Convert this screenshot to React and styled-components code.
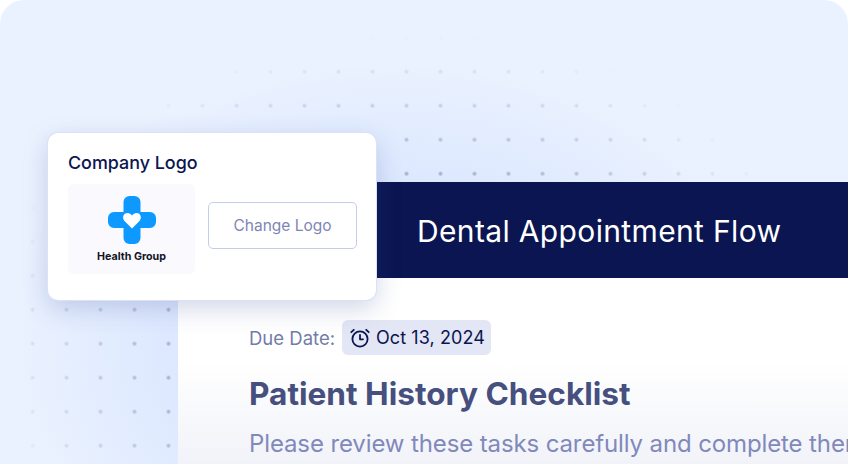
import React from "react";
import styled, { createGlobalStyle } from "styled-components";

const GlobalStyle = createGlobalStyle`
  html, body {
    margin: 0;
    padding: 0;
    background: #ffffff;
  }
  * {
    box-sizing: border-box;
  }
`;

const Stage = styled.div`
  position: relative;
  width: 848px;
  height: 464px;
  overflow: hidden;
  padding: 182px 0 0 178px;
  border-radius: 24px 24px 0 0;
  font-family: "Inter", "Liberation Sans", sans-serif;
  background:
    radial-gradient(ellipse 390px 290px at 395px 345px, #d9e6ff 0%, #dce8ff 55%, rgba(235, 242, 255, 0) 100%),
    #ebf2ff;
`;

const DotGrid = styled.div`
  position: absolute;
  inset: 0;
  background-image: radial-gradient(circle at 50% 50%, #a3a5c0 0, #a3a5c0 1.5px, transparent 2.2px);
  background-size: 34px 34px;
  background-position: 151.5px 20.7px;
  mask-image: radial-gradient(ellipse 430px 315px at 410px 345px, #000 45%, transparent 100%);
`;

const Sheet = styled.main`
  position: relative;
  width: 670px;
  height: 282px;
  display: flex;
  flex-direction: column;
  background: #ffffff;
  overflow: hidden;
`;

const Banner = styled.header`
  height: 96px;
  flex: none;
  display: flex;
  align-items: center;
  padding: 1px 0 0 239px;
  background: #0a1551;
  color: #ffffff;
  font-size: 30px;
  letter-spacing: 0.35px;
  white-space: nowrap;
`;

const Body = styled.section`
  flex: 1;
  display: flex;
  flex-direction: column;
  align-items: flex-start;
  padding: 42px 0 0 71px;
  white-space: nowrap;
  background: linear-gradient(180deg, #ffffff 0%, #ffffff 45%, #f1f3f9 100%);
`;

const DueRow = styled.div`
  display: flex;
  align-items: center;
  gap: 7px;
`;

const DueLabel = styled.span`
  font-size: 18.500px;
  color: #727bab;
`;

const DuePill = styled.div`
  display: flex;
  align-items: center;
  gap: 6px;
  height: 35px;
  padding: 0 6px 0 8px;
  border-radius: 6px;
  background: #e3e6f4;
  color: #0a1551;
  font-size: 18px;
  letter-spacing: 0.08px;
`;

const Heading = styled.h1`
  margin: 20px 0 0;
  font-size: 31.600px;
  line-height: 38px;
  font-weight: 700;
  color: #464f7d;
`;

const Lead = styled.p`
  margin: 16px 0 0;
  font-size: 24px;
  line-height: 30px;
  letter-spacing: -0.12px;
  color: #8189ba;
`;

const LogoCard = styled.aside`
  position: absolute;
  left: 48px;
  top: 133px;
  width: 328px;
  height: 167px;
  padding: 18px 19px 0 20px;
  border-radius: 10px;
  background: #ffffff;
  box-shadow: 0 0 0 1px #dbe2f4, 0 8px 26px rgba(60, 80, 150, 0.24);
`;

const CardTitle = styled.h2`
  margin: 0;
  font-size: 17.900px;
  line-height: 24px;
  font-weight: 500;
  color: #0a1551;
`;

const CardRow = styled.div`
  display: flex;
  align-items: flex-start;
  gap: 13px;
  margin-top: 9px;
`;

const LogoTile = styled.div`
  width: 127px;
  height: 90px;
  display: flex;
  flex-direction: column;
  align-items: center;
  padding-top: 12px;
  border-radius: 6px;
  background: #f9f9fe;
`;

const LogoName = styled.span`
  margin-top: 6px;
  font-size: 10.700px;
  line-height: 14px;
  font-weight: 700;
  color: #111526;
`;

const ChangeButton = styled.button`
  width: 149px;
  height: 47px;
  margin-top: 18px;
  padding: 0;
  border: 1px solid #c5cde8;
  border-radius: 5px;
  background: #ffffff;
  font-family: inherit;
  font-size: 15.500px;
  color: #7d86b5;
`;

const HealthMark = () => (
  <svg width="48" height="48" viewBox="0 0 48 48">
    <path
      fill="#0d99ff"
      d="M15.500 6a6 6 0 0 1 6-6h5a6 6 0 0 1 6 6v10H42a6 6 0 0 1 6 6v4a6 6 0 0 1-6 6H32.500v10a6 6 0 0 1-6 6h-5a6 6 0 0 1-6-6V32H6a6 6 0 0 1-6-6v-4a6 6 0 0 1 6-6h9.500z"
    />
    <path
      fill="#ffffff"
      d="M24 32.500 17 25.500c-3.500-3.400-1.700-8.500 2.400-8.500 1.900 0 3.500.9 4.600 2.400 1.100-1.500 2.700-2.400 4.600-2.400 4.100 0 5.900 5.100 2.400 8.500z"
    />
  </svg>
);

const AlarmIcon = () => (
  <svg width="20" height="20" viewBox="0 0 20 20" fill="none" stroke="#0a1551" strokeWidth="1.8" strokeLinecap="round" strokeLinejoin="round">
    <circle cx="10" cy="11" r="7.600" />
    <path d="M10 7v4.300h3" />
    <path d="M1.300 4.200 3.800 1.800" />
    <path d="M18.700 4.200 16.200 1.800" />
  </svg>
);

export default function App() {
  return (
    <>
      <GlobalStyle />
      <Stage>
        <DotGrid />
        <Sheet>
          <Banner>Dental Appointment Flow</Banner>
          <Body>
            <DueRow>
              <DueLabel>Due Date:</DueLabel>
              <DuePill>
                <AlarmIcon />
                Oct 13, 2024
              </DuePill>
            </DueRow>
            <Heading>Patient History Checklist</Heading>
            <Lead>Please review these tasks carefully and complete them</Lead>
          </Body>
        </Sheet>
        <LogoCard>
          <CardTitle>Company Logo</CardTitle>
          <CardRow>
            <LogoTile>
              <HealthMark />
              <LogoName>Health Group</LogoName>
            </LogoTile>
            <ChangeButton>Change Logo</ChangeButton>
          </CardRow>
        </LogoCard>
      </Stage>
    </>
  );
}
